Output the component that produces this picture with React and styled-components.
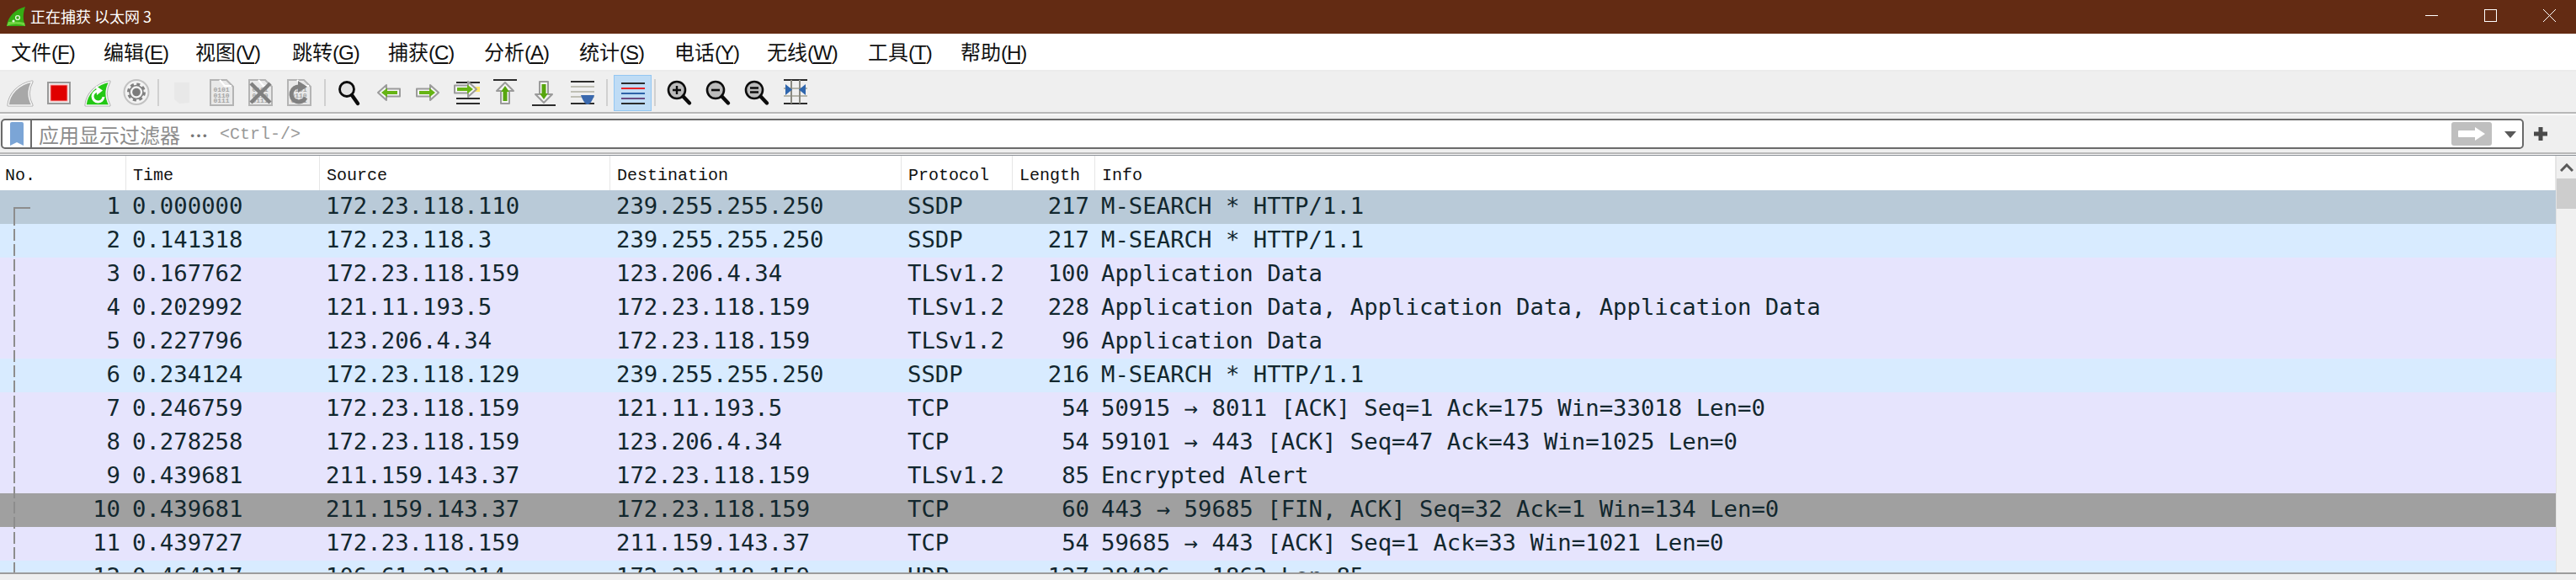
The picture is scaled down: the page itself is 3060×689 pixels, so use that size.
import React from 'react'
import styled, { createGlobalStyle } from 'styled-components'

const GlobalStyle = createGlobalStyle`
  html, body { margin: 0; padding: 0; background: #fff; }
  body { font-family: "Noto Sans CJK SC", "Liberation Sans", sans-serif; }
`

const Window = styled.div`
  width: 3060px;
  height: 689px;
  display: flex;
  flex-direction: column;
  overflow: hidden;
`
const TitleBar = styled.div`
  height: 40px;
  flex: none;
  display: flex;
  align-items: center;
  background: #632b13;
  color: #fff;
  padding: 0 24px 0 7px;
`
const TitleText = styled.span`
  margin-left: 5px;
  font-size: 18px;
  line-height: 36px;
  flex: 1;
  white-space: pre;
  padding-bottom: 3px;
`
const WinControls = styled.div`
  display: flex;
  align-items: center;
  gap: 55px;
  padding-bottom: 4px;
`
const MenuBar = styled.div`
  height: 43px;
  flex: none;
  display: flex;
  align-items: center;
  background: #fff;
  padding-left: 13px;
  border-bottom: 2px solid #ececec;
`
const MenuItem = styled.div`
  width: ${p => p.$w}px;
  font-size: 24px;
  color: #111;
  white-space: nowrap;
  padding-bottom: 2px;
  & u { text-underline-offset: 3px; text-decoration-thickness: 2px; }
  & span { font-family: "Liberation Sans", sans-serif; font-size: 24px; letter-spacing: -1px; }
`
const ToolBar = styled.div`
  height: 48px;
  flex: none;
  display: flex;
  align-items: center;
  background: #efefef;
  padding: 2px 0 0 1px;
  box-sizing: border-box;
`
const ToolBtn = styled.div`
  width: ${p => p.$wide ? 45 : 46}px;
  height: ${p => p.$wide ? 43 : 32}px;
  display: flex;
  align-items: center;
  justify-content: center;
  box-sizing: border-box;
  ${p => p.$wide && 'background: #bfdcf5; border: 1px solid #93c7f2;'}
`
const ToolSep = styled.div`
  width: 2px;
  height: 32px;
  background: #d0d0d0;
  margin-left: ${p => p.$l}px;
  margin-right: ${p => p.$r}px;
`
const Rule = styled.div`
  height: 2px;
  flex: none;
  background: #b8b8b8;
`
const Gap = styled.div`
  height: ${p => p.$h}px;
  flex: none;
  background: #f8f8f8;
`
const FilterBar = styled.div`
  height: 44px;
  flex: none;
  display: flex;
  align-items: center;
  background: #efefef;
  padding-left: 1px;
`
const FilterEdit = styled.div`
  width: 2997px;
  height: 36px;
  box-sizing: border-box;
  display: flex;
  align-items: center;
  background: #fff;
  border: 2px solid #6a6a6a;
  border-radius: 5px;
`
const BookmarkCell = styled.div`
  width: 33px;
  height: 100%;
  display: flex;
  align-items: center;
  justify-content: center;
  border-right: 2px solid #6a6a6a;
`
const Placeholder = styled.div`
  flex: 1;
  padding-left: 8px;
  font-size: 24px;
  color: #8c8c8c;
  white-space: pre;
  display: flex;
  align-items: center;
  & b { font-weight: 700; font-size: 22px; margin: 0 13px 0 11px; letter-spacing: 1px; color: #777; }
  & i { font-style: normal; font-family: "Liberation Mono", monospace; font-size: 20px; color: #999; }
`
const ApplyBtn = styled.div`
  width: 48px;
  height: 28px;
  background: #bfbfbf;
  border-radius: 3px;
  display: flex;
  align-items: center;
  justify-content: center;
`
const DropBtn = styled.div`
  width: 36px;
  box-sizing: border-box;
  display: flex;
  justify-content: center;
  padding: 2px 0 0 8px;
`
const PlusBtn = styled.div`
  flex: 1;
  display: flex;
  padding-left: 12px;
`
const DarkRule = styled.div`
  height: 1px;
  flex: none;
  background: #8a8f96;
`
const ListArea = styled.div`
  flex: none;
  height: 495px;
  display: flex;
  background: #fff;
`
const List = styled.div`
  width: 3036px;
  display: flex;
  flex-direction: column;
  position: relative;
  overflow: hidden;
`
const columns = '150px 230px 345px 346px 132px 98px 1fr'
const HeaderRow = styled.div`
  height: 41px;
  flex: none;
  display: grid;
  grid-template-columns: ${columns};
  background: #fff;
`
const HeaderCell = styled.div`
  font-family: "Liberation Mono", monospace;
  font-size: 20px;
  line-height: 32px;
  color: #111;
  padding: 8px 0 0 ${p => p.$first ? 6 : 8}px;
  border-right: 1px solid #e6e6e6;
  box-sizing: border-box;
`
const Row = styled.div`
  height: 40px;
  flex: none;
  display: grid;
  grid-template-columns: ${columns};
  background: ${p => p.$bg};
`
const Cell = styled.div`
  font-family: "DejaVu Sans Mono", monospace;
  font-size: 27.3px;
  line-height: 38px;
  color: #12272e;
  white-space: pre;
  overflow: hidden;
  padding: 0 7px;
  text-align: ${p => p.$right ? 'right' : 'left'};
`
const RelatedCorner = styled.div`
  position: absolute;
  left: 16px;
  top: 61px;
  width: 18px;
  height: 8px;
  border-left: 2px solid #8d8d8d;
  border-top: 2px solid #8d8d8d;
`
const RelatedLine = styled.div`
  position: absolute;
  left: 16px;
  top: 69px;
  bottom: 0;
  width: 2px;
  background: repeating-linear-gradient(#8d8d8d 0 14px, transparent 14px 18px);
`
const ScrollBar = styled.div`
  flex: 1;
  background: #f0f0f0;
  border-left: 1px solid #e3e3e3;
  display: flex;
  flex-direction: column;
`
const ScrollUp = styled.div`
  height: 27px;
  display: flex;
  align-items: center;
  justify-content: center;
`
const ScrollThumb = styled.div`
  height: 36px;
  background: #cdcdcd;
`
const StatusStrip = styled.div`
  flex: 1;
  background: #efefef;
  border-top: 2px solid #9c9c9c;
`

const BLUE = '#d8ebff'
const PURPLE = '#e6e4fd'
const packets = [
  ['1', '0.000000', '172.23.118.110', '239.255.255.250', 'SSDP', '217', 'M-SEARCH * HTTP/1.1', '#b9cad8'],
  ['2', '0.141318', '172.23.118.3', '239.255.255.250', 'SSDP', '217', 'M-SEARCH * HTTP/1.1', BLUE],
  ['3', '0.167762', '172.23.118.159', '123.206.4.34', 'TLSv1.2', '100', 'Application Data', PURPLE],
  ['4', '0.202992', '121.11.193.5', '172.23.118.159', 'TLSv1.2', '228', 'Application Data, Application Data, Application Data', PURPLE],
  ['5', '0.227796', '123.206.4.34', '172.23.118.159', 'TLSv1.2', '96', 'Application Data', PURPLE],
  ['6', '0.234124', '172.23.118.129', '239.255.255.250', 'SSDP', '216', 'M-SEARCH * HTTP/1.1', BLUE],
  ['7', '0.246759', '172.23.118.159', '121.11.193.5', 'TCP', '54', '50915 → 8011 [ACK] Seq=1 Ack=175 Win=33018 Len=0', PURPLE],
  ['8', '0.278258', '172.23.118.159', '123.206.4.34', 'TCP', '54', '59101 → 443 [ACK] Seq=47 Ack=43 Win=1025 Len=0', PURPLE],
  ['9', '0.439681', '211.159.143.37', '172.23.118.159', 'TLSv1.2', '85', 'Encrypted Alert', PURPLE],
  ['10', '0.439681', '211.159.143.37', '172.23.118.159', 'TCP', '60', '443 → 59685 [FIN, ACK] Seq=32 Ack=1 Win=134 Len=0', '#a0a0a0'],
  ['11', '0.439727', '172.23.118.159', '211.159.143.37', 'TCP', '54', '59685 → 443 [ACK] Seq=1 Ack=33 Win=1021 Len=0', PURPLE],
  ['12', '0.464217', '106.61.23.214', '172.23.118.159', 'UDP', '127', '38426 → 1863 Len=85', BLUE],
]
const menus = [
  ['文件', 'F', 110], ['编辑', 'E', 109], ['视图', 'V', 115], ['跳转', 'G', 114], ['捕获', 'C', 114], ['分析', 'A', 113],
  ['统计', 'S', 113], ['电话', 'Y', 110], ['无线', 'W', 120], ['工具', 'T', 110], ['帮助', 'H', 100],
]
const headers = ['No.', 'Time', 'Source', 'Destination', 'Protocol', 'Length', 'Info']

const Icon = ({ children }) => (
  <svg width="32" height="32" viewBox="0 0 32 32" style={{ overflow: 'visible' }}>{children}</svg>
)
const FIN = 'M2 31 C3 18 14 6 30 3 C25 12 25 22 30 31 Z'
const Fin = ({ fill, children }) => (
  <Icon>
    <path d={FIN} fill="none" stroke="#adadad" strokeWidth="3.2" strokeLinejoin="round" />
    <path d={FIN} fill={fill} stroke="#f6f6f6" strokeWidth="1.4" strokeLinejoin="round" />
    {children}
  </Icon>
)
const StopIcon = () => (
  <Icon>
    <rect x="3" y="4" width="26" height="25" fill="#f0f0f0" stroke="#999" strokeWidth="2" />
    <rect x="6" y="7" width="20" height="19" fill="#e00000" stroke="#f7a0a0" strokeWidth="1" />
  </Icon>
)
const GearIcon = () => (
  <Icon>
    <circle cx="16" cy="15.5" r="14.5" fill="#f3f3f3" stroke="#c2c2c2" strokeWidth="2" />
    <circle cx="16" cy="15.5" r="9.5" fill="none" stroke="#808080" strokeWidth="3" strokeDasharray="4 3.46" />
    <circle cx="16" cy="15.5" r="8" fill="none" stroke="#808080" strokeWidth="1.6" />
    <circle cx="16" cy="15.5" r="4.8" fill="#7b7b7b" />
  </Icon>
)
const FileBase = ({ children }) => (
  <Icon>
    <path d="M3 1 H22 L30 9 V31 H3 Z" fill="#e9e9e9" stroke="#b4b4b4" strokeWidth="2" />
    <path d="M14 1 L20 8 H28" fill="none" stroke="#fff" strokeWidth="2" />
    <text x="16" fontFamily="Liberation Mono, monospace" fontSize="8" fontWeight="700" fill="#a5a5a5" textAnchor="middle">
      <tspan x="16" y="15">0101</tspan>
      <tspan x="16" y="21.5">0110</tspan>
      <tspan x="16" y="28">0111</tspan>
    </text>
    {children}
  </Icon>
)
const ReloadArrow = () => (
  <g>
    <path d="M24 22 A9 9 0 1 1 17 9" fill="none" stroke="#808080" strokeWidth="5" />
    <path d="M15 2 L26 9 L15 16 Z" fill="#808080" />
  </g>
)
const Lens = ({ children, fill = '#bcbcbc' }) => (
  <Icon>
    <circle cx="13" cy="13" r="10" fill={fill} stroke="#0c0c0c" strokeWidth="2.6" />
    <path d="M20.5 20.5 L28 28.5" stroke="#0c0c0c" strokeWidth="4.4" strokeLinecap="round" />
    {children}
  </Icon>
)
const Arrow = ({ transform }) => (
  <g transform={transform}>
    <path d="M1 10 L11 1 V5.5 H27 V14.5 H11 V19 Z" fill="#f5f5f5" stroke="#9b9b9b" strokeWidth="2" strokeLinejoin="round" />
    <path d="M5 10 L12 4.5 V8 H24 V12 H12 V15.5 Z" fill="#66b414" />
  </g>
)
const Line = ({ y, c = '#2c2c2c', x1 = 2, x2 = 30, w = 2 }) => (
  <path d={`M${x1} ${y} H${x2}`} stroke={c} strokeWidth={w} />
)
const LeftIcon = () => <Icon><Arrow transform="translate(2 6)" /></Icon>
const RightIcon = () => <Icon><Arrow transform="translate(30 6) scale(-1 1)" /></Icon>
const GotoIcon = () => (
  <Icon>
    <Line y={4} x1={4} x2={32} />
    <rect x="22" y="9" width="10" height="6" fill="#ffe766" />
    <Line y={23} x1={4} x2={32} />
    <Line y={29} x1={4} x2={32} />
    <Arrow transform="translate(29 2) scale(-1 1)" />
  </Icon>
)
const TopIcon = () => (
  <Icon>
    <Line y={1} />
    <path d="M16 4 L26 14 H21 V29 H11 V14 H6 Z" fill="#f5f5f5" stroke="#9b9b9b" strokeWidth="2" strokeLinejoin="round" />
    <path d="M16 8 L21 15 H18.5 V26 H13.5 V15 H11 Z" fill="#57a60e" />
  </Icon>
)
const BottomIcon = () => (
  <Icon>
    <Line y={31} />
    <path d="M16 28 L6 18 H11 V3 H21 V18 H26 Z" fill="#f5f5f5" stroke="#9b9b9b" strokeWidth="2" strokeLinejoin="round" />
    <path d="M16 24 L11 17 H13.5 V6 H18.5 V17 H21 Z" fill="#57a60e" />
  </Icon>
)
const LastIcon = () => (
  <Icon>
    <Line y={3} />
    <Line y={9} c="#bfbfb5" />
    <Line y={15} c="#bfbfb5" />
    <Line y={21} c="#bfbfb5" />
    <Line y={29} />
    <path d="M14 19 H30 C28 25 25 30 22 30 C19 30 16 25 14 19 Z" fill="#3a69ae" />
  </Icon>
)
const ColorizeIcon = () => (
  <Icon>
    <Line y={5} />
    <Line y={11} c="#e8262b" />
    <Line y={17} c="#2f62a8" />
    <Line y={23} c="#6a4a80" />
    <Line y={29} />
  </Icon>
)
const ResizeIcon = () => (
  <Icon>
    <Line y={1} />
    <Line y={11} c="#b5b5aa" />
    <Line y={20} c="#b5b5aa" />
    <Line y={29} />
    <path d="M11 1 V29 M21 1 V29" stroke="#8a8a82" strokeWidth="2" />
    <path d="M4 6 L12 12.5 L4 19 Z M28 6 L20 12.5 L28 19 Z" fill="#2f66ad" />
  </Icon>
)

const leftTools = [
  <Fin fill="#a8a8a8" />,
  <StopIcon />,
  <Fin fill="#22c814">
    <path d="M23 21 A6.5 6.5 0 1 1 16 14" fill="none" stroke="#fff" strokeWidth="3" />
    <path d="M14 8 L22 13.5 L15 19 Z" fill="#fff" />
  </Fin>,
  <GearIcon />,
]
const fileTools = [
  <Icon><path d="M6 4 H24 V28 L12 29 L6 24 Z" fill="#e8e8e8" /></Icon>,
  <FileBase />,
  <FileBase>
    <path d="M5 5 L28 28 M28 5 L5 28" stroke="#808080" strokeWidth="4.5" />
  </FileBase>,
  <FileBase><ReloadArrow /></FileBase>,
]
const goTools = [
  <Icon>
    <circle cx="12" cy="12" r="8.5" fill="#e4e4e4" stroke="#0c0c0c" strokeWidth="2.8" />
    <path d="M18 19 L25 29" stroke="#0c0c0c" strokeWidth="4.4" strokeLinecap="round" />
  </Icon>,
  <LeftIcon />, <RightIcon />, <GotoIcon />, <TopIcon />, <BottomIcon />, <LastIcon />,
]
const zoomTools = [
  <Lens><path d="M8 13 H18 M13 8 V18" stroke="#0c0c0c" strokeWidth="2.4" /></Lens>,
  <Lens><path d="M8 13 H18" stroke="#0c0c0c" strokeWidth="2.6" /></Lens>,
  <Lens><path d="M8 10.5 H18 M8 15.5 H18" stroke="#0c0c0c" strokeWidth="2.4" /></Lens>,
  <ResizeIcon />,
]
const tools = list => list.map((icon, i) => <ToolBtn key={i}>{icon}</ToolBtn>)

export default function App() {
  return (
    <Window>
      <GlobalStyle />
      <TitleBar>
        <svg width="24" height="24" viewBox="0 0 24 24">
          <path d="M1 23 C2 12 11 3 23 0 C20 8 20 16 23 23 Z" fill="#35ad14" />
          <path d="M1 23 C8 20 16 20 23 23 L22 19 C14 17 8 18 3 18 Z" fill="#6fd43f" />
          <circle cx="14" cy="13" r="2.4" fill="none" stroke="#e2f6d8" strokeWidth="1.4" />
          <circle cx="9" cy="17" r="1.6" fill="#e2f6d8" />
        </svg>
        <TitleText>正在捕获 以太网 3</TitleText>
        <WinControls>
          <svg width="15" height="15" viewBox="0 0 15 15"><path d="M0 7.5 H15" stroke="#fff" /></svg>
          <svg width="15" height="15" viewBox="0 0 15 15"><rect x=".5" y=".5" width="14" height="14" fill="none" stroke="#fff" /></svg>
          <svg width="15" height="15" viewBox="0 0 15 15"><path d="M0 0 L15 15 M15 0 L0 15" stroke="#fff" /></svg>
        </WinControls>
      </TitleBar>
      <MenuBar>
        {menus.map(([label, key, w]) => (
          <MenuItem key={key} $w={w}>{label}<span>(<u>{key}</u>)</span></MenuItem>
        ))}
      </MenuBar>
      <ToolBar>
        {tools(leftTools)}
        <ToolSep $l={2} $r={5} />
        {tools(fileTools)}
        <ToolSep $l={7} $r={6} />
        {tools(goTools)}
        <ToolSep $l={5} $r={7} />
        <ToolBtn $wide><ColorizeIcon /></ToolBtn>
        <ToolSep $l={3} $r={5} />
        {tools(zoomTools)}
      </ToolBar>
      <Rule />
      <Gap $h={2} />
      <FilterBar>
        <FilterEdit>
          <BookmarkCell>
            <svg width="16" height="28" viewBox="0 0 16 28">
              <path d="M0 2 Q0 0 2 0 H14 Q16 0 16 2 V28 L8 24 L0 28 Z" fill="#7ba5d6" />
            </svg>
          </BookmarkCell>
          <Placeholder>应用显示过滤器<b>…</b><i>&lt;Ctrl-/&gt;</i></Placeholder>
          <ApplyBtn>
            <svg width="34" height="18" viewBox="0 0 34 18">
              <path d="M1 6 Q1 5 2 5 H21 V1 L33 9 L21 17 V13 H2 Q1 13 1 12 Z" fill="#fff" />
            </svg>
          </ApplyBtn>
          <DropBtn>
            <svg width="14" height="8" viewBox="0 0 14 8"><path d="M0 0 H14 L7 8 Z" fill="#595959" /></svg>
          </DropBtn>
        </FilterEdit>
        <PlusBtn>
          <svg width="16" height="16" viewBox="0 0 16 16"><path d="M8 0 V16 M0 8 H16" stroke="#4a4a4a" strokeWidth="5" /></svg>
        </PlusBtn>
      </FilterBar>
      <Rule />
      <Gap $h={1} />
      <DarkRule />
      <ListArea>
        <List>
          <HeaderRow>
            {headers.map((h, i) => <HeaderCell key={h} $first={i === 0}>{h}</HeaderCell>)}
          </HeaderRow>
          {packets.map(p => (
            <Row key={p[0]} $bg={p[7]}>
              <Cell $right>{p[0]}</Cell>
              <Cell>{p[1]}</Cell>
              <Cell>{p[2]}</Cell>
              <Cell>{p[3]}</Cell>
              <Cell>{p[4]}</Cell>
              <Cell $right>{p[5]}</Cell>
              <Cell>{p[6]}</Cell>
            </Row>
          ))}
          <RelatedCorner />
          <RelatedLine />
        </List>
        <ScrollBar>
          <ScrollUp>
            <svg width="16" height="10" viewBox="0 0 16 10"><path d="M1 9 L8 2 L15 9" fill="none" stroke="#5a5a5a" strokeWidth="3" /></svg>
          </ScrollUp>
          <ScrollThumb />
        </ScrollBar>
      </ListArea>
      <StatusStrip />
    </Window>
  )
}
